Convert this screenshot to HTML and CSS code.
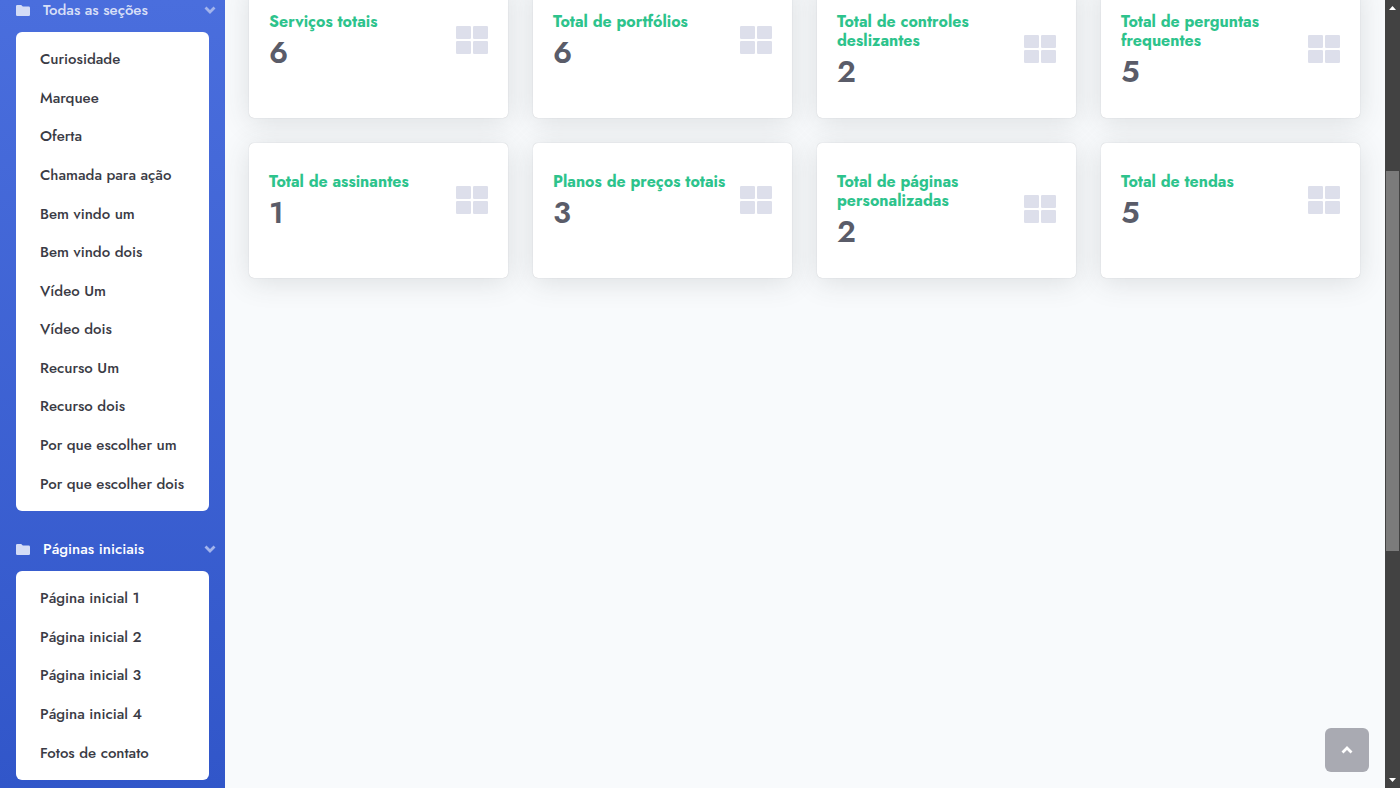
FILE: index.html
```html
<!DOCTYPE html>
<html lang="pt">
<head>
	<meta charset="utf-8">
	<meta name="viewport" content="width=device-width, initial-scale=1">
	<title>Painel</title>
	<link rel="stylesheet" href="styles.css">
</head>
<body>
	<!-- shared icons -->
	<svg class="sprite" aria-hidden="true">
		<symbol id="folder" viewBox="0 0 14 11">
			<path d="M1.3 0h3.9l1.6 1.6h5.9A1.3 1.3 0 0 1 14 2.9v6.8A1.3 1.3 0 0 1 12.7 11H1.3A1.3 1.3 0 0 1 0 9.7V1.3A1.3 1.3 0 0 1 1.3 0z"/>
		</symbol>
		<symbol id="chevron" viewBox="0 0 12 8">
			<path d="M1.5 1.5l4.5 4.5 4.5-4.5" fill="none" stroke="currentColor" stroke-width="2.8"/>
		</symbol>
		<symbol id="grid" viewBox="0 0 32 28">
			<rect width="15" height="13" rx="1.3"/>
			<rect x="17" width="15" height="13" rx="1.3"/>
			<rect y="15" width="15" height="13" rx="1.3"/>
			<rect x="17" y="15" width="15" height="13" rx="1.3"/>
		</symbol>
	</svg>

	<nav class="sidebar">
		<button class="nav-toggle" type="button" aria-expanded="true">
			<svg class="icon-folder"><use href="#folder"/></svg>
			<span>Todas as seções</span>
			<svg class="icon-chevron"><use href="#chevron"/></svg>
		</button>
		<div class="submenu submenu-sections">
			<a href="#">Curiosidade</a>
			<a href="#">Marquee</a>
			<a href="#">Oferta</a>
			<a href="#">Chamada para ação</a>
			<a href="#">Bem vindo um</a>
			<a href="#">Bem vindo dois</a>
			<a href="#">Vídeo Um</a>
			<a href="#">Vídeo dois</a>
			<a href="#">Recurso Um</a>
			<a href="#">Recurso dois</a>
			<a href="#">Por que escolher um</a>
			<a href="#">Por que escolher dois</a>
		</div>

		<button class="nav-toggle active" type="button" aria-expanded="true">
			<svg class="icon-folder"><use href="#folder"/></svg>
			<span>Páginas iniciais</span>
			<svg class="icon-chevron"><use href="#chevron"/></svg>
		</button>
		<div class="submenu submenu-pages">
			<a href="#">Página inicial 1</a>
			<a href="#">Página inicial 2</a>
			<a href="#">Página inicial 3</a>
			<a href="#">Página inicial 4</a>
			<a href="#">Fotos de contato</a>
		</div>
	</nav>

	<main class="content">
		<div class="cards">
			<div class="card">
				<div class="card-body">
					<div><h2>Serviços totais</h2><p>6</p></div>
					<svg class="icon-grid"><use href="#grid"/></svg>
				</div>
			</div>
			<div class="card">
				<div class="card-body">
					<div><h2>Total de portfólios</h2><p>6</p></div>
					<svg class="icon-grid"><use href="#grid"/></svg>
				</div>
			</div>
			<div class="card">
				<div class="card-body">
					<div><h2>Total de controles deslizantes</h2><p>2</p></div>
					<svg class="icon-grid"><use href="#grid"/></svg>
				</div>
			</div>
			<div class="card">
				<div class="card-body">
					<div><h2>Total de perguntas frequentes</h2><p>5</p></div>
					<svg class="icon-grid"><use href="#grid"/></svg>
				</div>
			</div>
			<div class="card">
				<div class="card-body">
					<div><h2>Total de assinantes</h2><p>1</p></div>
					<svg class="icon-grid"><use href="#grid"/></svg>
				</div>
			</div>
			<div class="card">
				<div class="card-body">
					<div><h2>Planos de preços totais</h2><p>3</p></div>
					<svg class="icon-grid"><use href="#grid"/></svg>
				</div>
			</div>
			<div class="card">
				<div class="card-body">
					<div><h2>Total de páginas personalizadas</h2><p>2</p></div>
					<svg class="icon-grid"><use href="#grid"/></svg>
				</div>
			</div>
			<div class="card">
				<div class="card-body">
					<div><h2>Total de tendas</h2><p>5</p></div>
					<svg class="icon-grid"><use href="#grid"/></svg>
				</div>
			</div>
		</div>
	</main>

	<button class="scroll-top" type="button" aria-label="Voltar ao topo">
		<svg class="icon-up"><use href="#chevron"/></svg>
	</button>

	<div class="scrollbar" aria-hidden="true">
		<svg class="arrow" viewBox="0 0 15 17"><path d="M4 10h7L7.5 6z"/></svg>
		<div class="track-before"></div>
		<div class="thumb"></div>
		<div class="track-after"></div>
		<svg class="arrow" viewBox="0 0 15 17"><path d="M4 7h7l-3.5 4z"/></svg>
	</div>
</body>
</html>
```
FILE: styles.css
```css
* {
	box-sizing: border-box;
}
body {
	margin: 0;
	display: flex;
	height: 100vh;
	overflow: hidden;
	background: #f8fafc;
	font-family: Jost, Lato, "Open Sans", sans-serif;
	color: #3a3b45;
}
.sprite {
	display: none;
}
svg {
	fill: currentColor;
	flex-shrink: 0;
}

/* sidebar */
.sidebar {
	flex: 0 0 225px;
	padding: 0 16px;
	background: linear-gradient(180deg, #4a6edd 0%, #3156c9 100%);
}
.nav-toggle {
	display: flex;
	align-items: center;
	width: 100%;
	height: 44px;
	padding: 0;
	border: 0;
	background: none;
	color: rgba(255, 255, 255, 0.8);
	font: 500 15px/22px Jost, Lato, "Open Sans", sans-serif;
	text-align: left;
	cursor: pointer;
}
.nav-toggle:first-child {
	margin-top: -12px;
}
.nav-toggle.active {
	color: #fff;
}
.nav-toggle span {
	flex: 1;
	margin-left: 13px;
}
.icon-folder {
	width: 14px;
	height: 11px;
	color: #d3dcf6;
}
.icon-chevron {
	width: 12px;
	height: 8px;
	margin-right: -7px;
	color: #a3b4ec;
}
.submenu {
	display: flex;
	flex-direction: column;
	margin-bottom: 16px;
	padding: 8px 0;
	border-radius: 6px;
	background: #fff;
}
.submenu-sections {
	min-height: 479px;
}
.submenu-pages {
	min-height: 209px;
}
.submenu a {
	display: flex;
	flex: 1;
	align-items: center;
	padding: 0 0 0 24px;
	color: #3a3b45;
	font-size: 15px;
	font-weight: 500;
	line-height: 22px;
	text-decoration: none;
	white-space: nowrap;
}
.submenu a:hover {
	background: #eaecf4;
}

/* cards */
.content {
	flex: 1;
	min-width: 0;
	padding: 0 25px 0 24px;
}
.cards {
	display: grid;
	grid-template-columns: repeat(4, 1fr);
	gap: 25px;
	margin-top: -17px;
}
.card {
	padding: 29px 20px 32px;
	border-radius: 5px;
	background: #fff;
	box-shadow: 0 0 1px rgba(58, 59, 69, 0.3), 0 4px 28px rgba(58, 70, 69, 0.15);
}
.card-body {
	display: flex;
	align-items: center;
	justify-content: space-between;
}
.card h2 {
	margin: 0;
	color: #2dc38c;
	font-size: 16px;
	font-weight: 700;
	line-height: 19px;
}
.card p {
	margin: 8px 0 0;
	color: #5a5c69;
	font-size: 30px;
	font-weight: 600;
	line-height: 28px;
}
.icon-grid {
	width: 32px;
	height: 28px;
	color: #dddfeb;
}

.scroll-top {
	position: fixed;
	right: 31px;
	bottom: 16px;
	display: flex;
	align-items: center;
	justify-content: center;
	width: 44px;
	height: 44px;
	padding: 0;
	border: 0;
	border-radius: 6px;
	background: #a9aab2;
	color: #fff;
	cursor: pointer;
}
.icon-up {
	width: 12px;
	height: 8px;
	transform: rotate(180deg);
}

/* page scrollbar */
.scrollbar {
	display: flex;
	flex: 0 0 15px;
	flex-direction: column;
	background: #424242;
	color: #fff;
}
.arrow {
	width: 15px;
	height: 17px;
}
.track-before {
	flex: 154;
}
.thumb {
	flex: 380;
	margin: 0 1px;
	background: #7b7b7b;
}
.track-after {
	flex: 220;
}
```
